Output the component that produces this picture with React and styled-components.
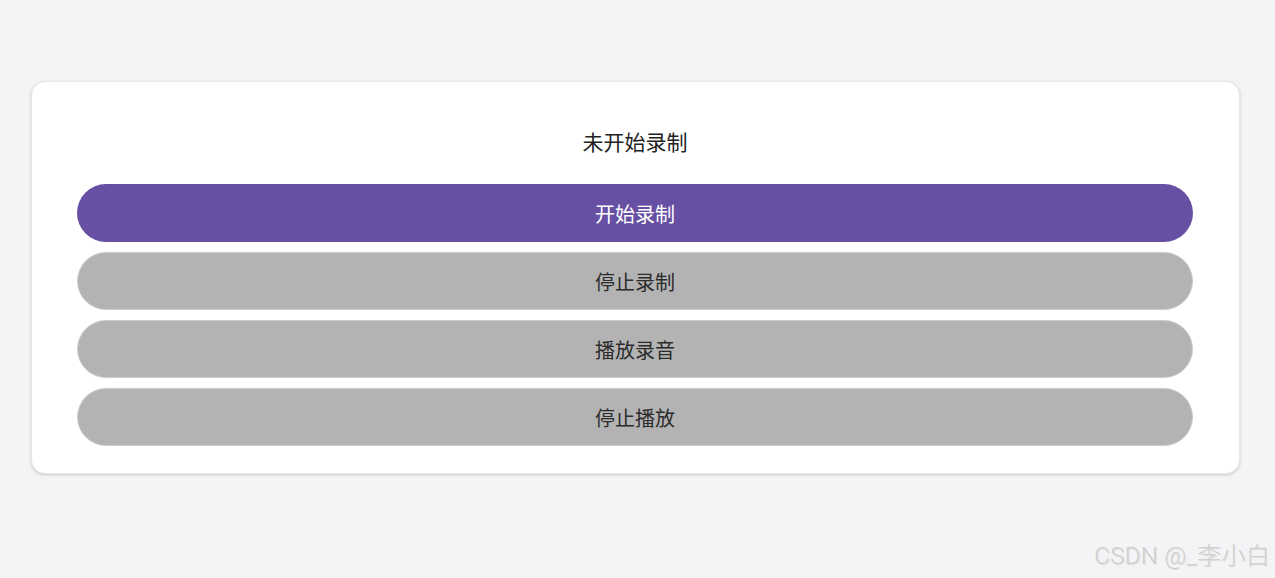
import React from "react";
import styled, { createGlobalStyle } from "styled-components";

const Global = createGlobalStyle`
  html, body {
    margin: 0;
    padding: 0;
    background: #f4f4f6;
    font-family: Roboto, "Noto Sans CJK SC", sans-serif;
  }
`;

const Page = styled.div`
  position: relative;
  height: 578px;
  padding: 81px 35px 0 31px;
  box-sizing: border-box;
`;

const Card = styled.div`
  background: #fff;
  border-radius: 14px;
  box-shadow: 0 1px 3px rgba(0, 0, 0, 0.18);
  border: 1px solid #e8e8ea;
  padding: 49px 46px 27px 45px;
  display: flex;
  flex-direction: column;
  gap: 10px;
`;

const Status = styled.div`
  text-align: center;
  font-size: 21px;
  line-height: 24px;
  color: #222;
  margin-bottom: 19px;
`;

const Button = styled.button`
  height: 58px;
  border-radius: 29px;
  font-family: inherit;
  font-size: 20px;
  box-sizing: border-box;
  cursor: pointer;
  background: ${(p) => (p.$active ? "#6750a4" : "#b3b3b3")};
  color: ${(p) => (p.$active ? "#fff" : "#2b2b2b")};
  border: ${(p) => (p.$active ? "none" : "1.5px solid #cdcdcd")};
`;

const Watermark = styled.div`
  position: absolute;
  right: 5px;
  bottom: 7px;
  font-size: 24px;
  font-weight: 300;
  letter-spacing: 0.3px;
  color: #cfcfcf;
  text-shadow: 1px 1px 1px rgba(0, 0, 0, 0.1);
  font-family: Roboto, "Noto Sans CJK SC", sans-serif;
`;

const buttons = [
  { label: "开始录制", active: true },
  { label: "停止录制" },
  { label: "播放录音" },
  { label: "停止播放" },
];

export default function App() {
  return (
    <Page>
      <Global />
      <Card>
        <Status>未开始录制</Status>
        {buttons.map((b) => (
          <Button key={b.label} $active={b.active}>
            {b.label}
          </Button>
        ))}
      </Card>
      <Watermark>CSDN @_李小白</Watermark>
    </Page>
  );
}
